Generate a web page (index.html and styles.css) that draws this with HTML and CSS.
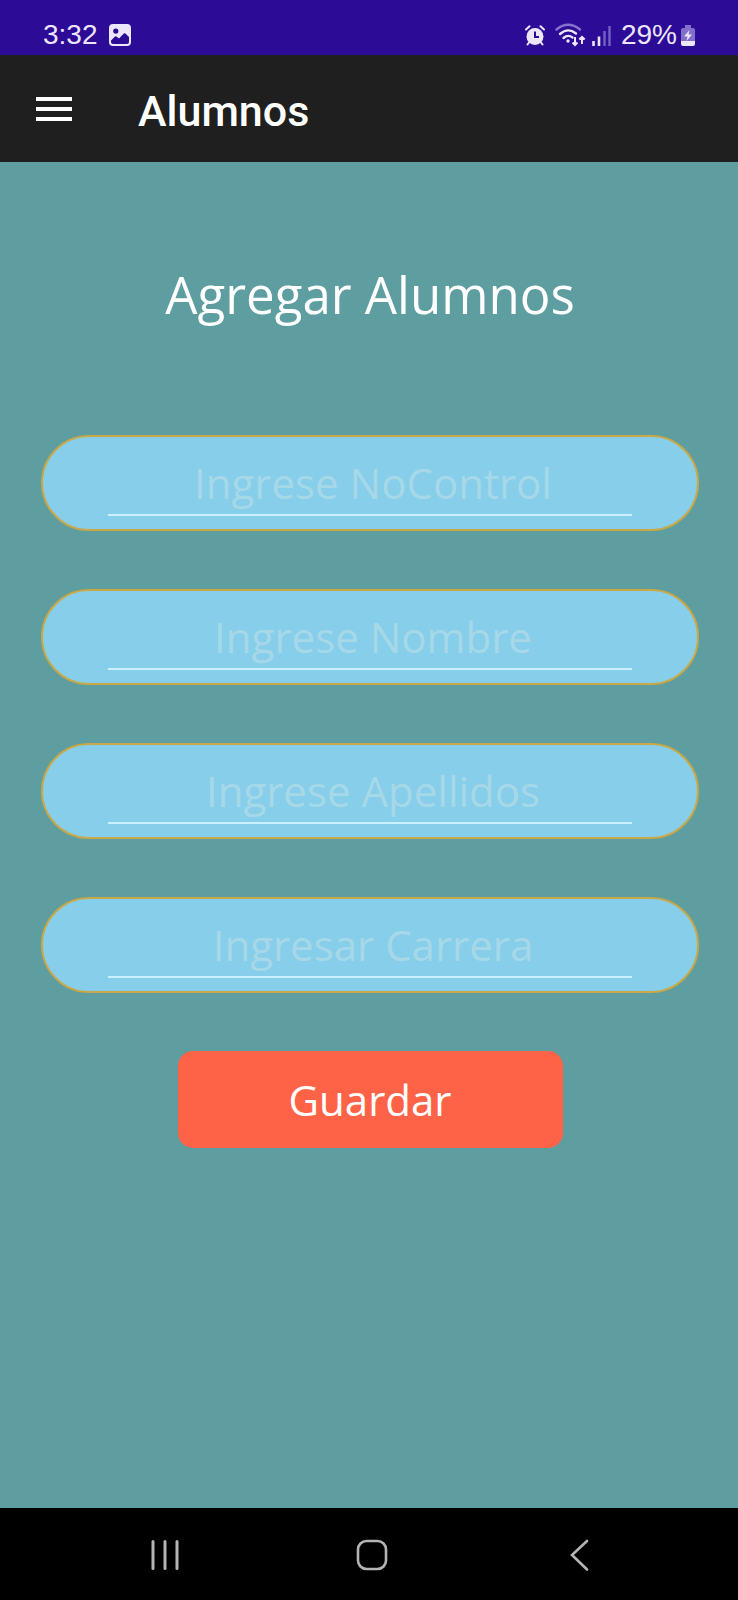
FILE: index.html
```html
<!DOCTYPE html>
<html lang="es">
<head>
<meta charset="utf-8">
<meta name="viewport" content="width=device-width, initial-scale=1">
<title>Alumnos</title>
<link rel="stylesheet" href="styles.css">
</head>
<body>
<div class="screen">
  <div class="status-bar">
    <div class="status-group">
      <span>3:32</span>
      <svg class="icon-photo" width="22" height="22" viewBox="0 0 22 22" aria-hidden="true">
        <path fill="#ece6fb" fill-rule="evenodd" d="M4 0H18Q22 0 22 4V18Q22 22 18 22H4Q0 22 0 18V4Q0 0 4 0ZM6.800 4.500A2.600 2.600 0 1 0 6.800 9.700A2.600 2.600 0 1 0 6.800 4.500ZM2 16.500V18Q2 20 4 20H18Q20 20 20 18V13L16.500 9.500Q15.500 8.700 14.500 9.700L10 14.500L7.500 12.600Q6.500 12 5.500 12.900Z"/>
      </svg>
    </div>
    <div class="status-group status-right">
      <svg width="20" height="21" viewBox="0 0 20 21" aria-hidden="true">
        <g fill="none" stroke="#ece6fb" stroke-width="2" stroke-linecap="round"><path d="M1 4.500L4.500 1.200M15.500 1.200L19 4.500M4 17.500L2.500 19.500M16 17.500L17.500 19.500"/></g>
        <circle cx="10" cy="11.500" r="8.500" fill="#ece6fb"/>
        <path d="M10 6.500V12H14" fill="none" stroke="#2c0b96" stroke-width="2"/>
      </svg>
      <svg class="icon-wifi" width="31" height="24" viewBox="0 0 31 24" aria-hidden="true">
        <g fill="none" stroke-width="2.400" stroke-linecap="round">
          <path d="M1.500 6.500Q13 -3 25 6.500" stroke="#8673cd"/>
          <path d="M5 11Q13 4 21 10.500M8.500 15Q13 11 17.500 14.500" stroke="#ece6fb"/>
        </g>
        <circle cx="13" cy="18" r="1.700" fill="#ece6fb"/>
        <path d="M20 14V22M17.500 19.500L20 22L22.500 19.500M27 21V14M24.300 16.500L27 13.800L29.700 16.500" fill="none" stroke="#ece6fb" stroke-width="2"/>
      </svg>
      <svg class="icon-signal" width="19" height="21" viewBox="0 0 19 21" aria-hidden="true">
        <path d="M1.500 16V21M7 11.500V21" stroke="#ece6fb" stroke-width="2.600"/>
        <path d="M12.500 6V21M17.500 1V21" stroke="#7460c3" stroke-width="2.400"/>
      </svg>
      <span>29%</span>
      <svg class="icon-battery" width="14" height="21" viewBox="0 0 14 21" aria-hidden="true">
        <path d="M4 0H10V3H12Q14 3 14 5V16H0V5Q0 3 2 3H4Z" fill="#8170c9"/>
        <path d="M0 16H14V19Q14 21 12 21H2Q0 21 0 19Z" fill="#ece6fb"/>
        <path d="M8.500 5L3 11.500H6.500L5.500 16L11 9.500H7.500Z" fill="#ece6fb"/>
      </svg>
    </div>
  </div>

  <header class="app-bar">
    <button class="menu-button" type="button" aria-label="Abrir menú">
      <svg width="36" height="24" viewBox="0 0 36 24" aria-hidden="true"><path d="M0 2H36M0 12H36M0 22H36" stroke="#fff" stroke-width="4"/></svg>
    </button>
    <h1 class="app-title">Alumnos</h1>
  </header>

  <main class="content">
    <h2 class="form-title">Agregar Alumnos</h2>
    <form class="form">
      <div class="field"><input class="field-input" type="text" placeholder="Ingrese NoControl" aria-label="NoControl"></div>
      <div class="field"><input class="field-input" type="text" placeholder="Ingrese Nombre" aria-label="Nombre"></div>
      <div class="field"><input class="field-input" type="text" placeholder="Ingrese Apellidos" aria-label="Apellidos"></div>
      <div class="field"><input class="field-input" type="text" placeholder="Ingresar Carrera" aria-label="Carrera"></div>
      <button class="save-button" type="button">Guardar</button>
    </form>
  </main>

  <nav class="nav-bar" aria-label="Sistema">
    <button class="nav-button" type="button" aria-label="Recientes">
      <svg width="32" height="32" viewBox="0 0 32 32" aria-hidden="true"><path d="M4 2.500V29.500M16 2.500V29.500M28 2.500V29.500" stroke="#b4b4b4" stroke-width="3" stroke-linecap="round"/></svg>
    </button>
    <button class="nav-button" type="button" aria-label="Inicio">
      <svg width="32" height="32" viewBox="0 0 32 32" aria-hidden="true"><rect x="2" y="2" width="28" height="28" rx="8.500" fill="none" stroke="#b4b4b4" stroke-width="2.600"/></svg>
    </button>
    <button class="nav-button" type="button" aria-label="Atrás">
      <svg width="32" height="32" viewBox="0 0 32 32" aria-hidden="true"><path d="M24 2L9 16L24 30.500" fill="none" stroke="#b4b4b4" stroke-width="2.600" stroke-linecap="round"/></svg>
    </button>
  </nav>
</div>
</body>
</html>
```
FILE: styles.css
```css
* {
  box-sizing: border-box;
}

body {
  margin: 0;
  background: #5f9ea0;
  font-family: "Open Sans", "Noto Sans", sans-serif;
}

button {
  border: 0;
  padding: 0;
  background: none;
  font-family: inherit;
  cursor: pointer;
}

svg {
  display: block;
}

.screen {
  display: flex;
  flex-direction: column;
  min-height: 100vh;
}

.status-bar {
  display: flex;
  justify-content: space-between;
  padding: 17px 43px 2px;
  background: #2c0b96;
  color: #ece6fb;
  font-family: "Liberation Sans", Arial, sans-serif;
  font-size: 28px;
  line-height: 36px;
}

.status-group {
  display: flex;
  align-items: center;
  gap: 11px;
}

.status-right {
  gap: 10px;
}

.icon-signal {
  margin-left: -4px;
}

.icon-battery {
  margin-left: -6px;
}

.app-bar {
  display: flex;
  align-items: center;
  gap: 66px;
  padding: 24px 36px 23px;
  background: #1f1f1f;
}

.app-title {
  margin: 0;
  padding-top: 4px;
  color: #fff;
  font: 500 43px/56px Roboto, sans-serif;
}

.content {
  flex: 1;
  padding: 96px 39px 48px 41px;
}

.form-title {
  margin: 0 0 105px;
  color: #fff;
  font-size: 51px;
  font-weight: 400;
  line-height: 72px;
  text-align: center;
}

.form {
  display: flex;
  flex-direction: column;
  gap: 58px;
}

.field {
  padding: 13px 65px;
  border: 2px solid #c9a845;
  border-radius: 48px;
  background: #87ceeb;
}

.field-input {
  display: block;
  width: 100%;
  height: 66px;
  padding: 0 0 0 6px;
  border: 0;
  border-bottom: 2px solid #c9f1ff;
  outline: 0;
  background: none;
  color: #fff;
  font-family: inherit;
  font-size: 42px;
  text-align: center;
}

.field-input::placeholder {
  color: #a6d8e8;
  opacity: 1;
}

.save-button {
  align-self: center;
  width: 385px;
  max-width: 100%;
  padding: 19px 24px 18px;
  border-radius: 15px;
  background: #ff6347;
  color: #fff;
  font-size: 42px;
  line-height: 60px;
}

.nav-bar {
  display: grid;
  grid-template-columns: repeat(3, 1fr);
  padding: 31px 56px 29px 61px;
  background: #000;
}

.nav-button {
  display: flex;
  justify-content: center;
}
```
